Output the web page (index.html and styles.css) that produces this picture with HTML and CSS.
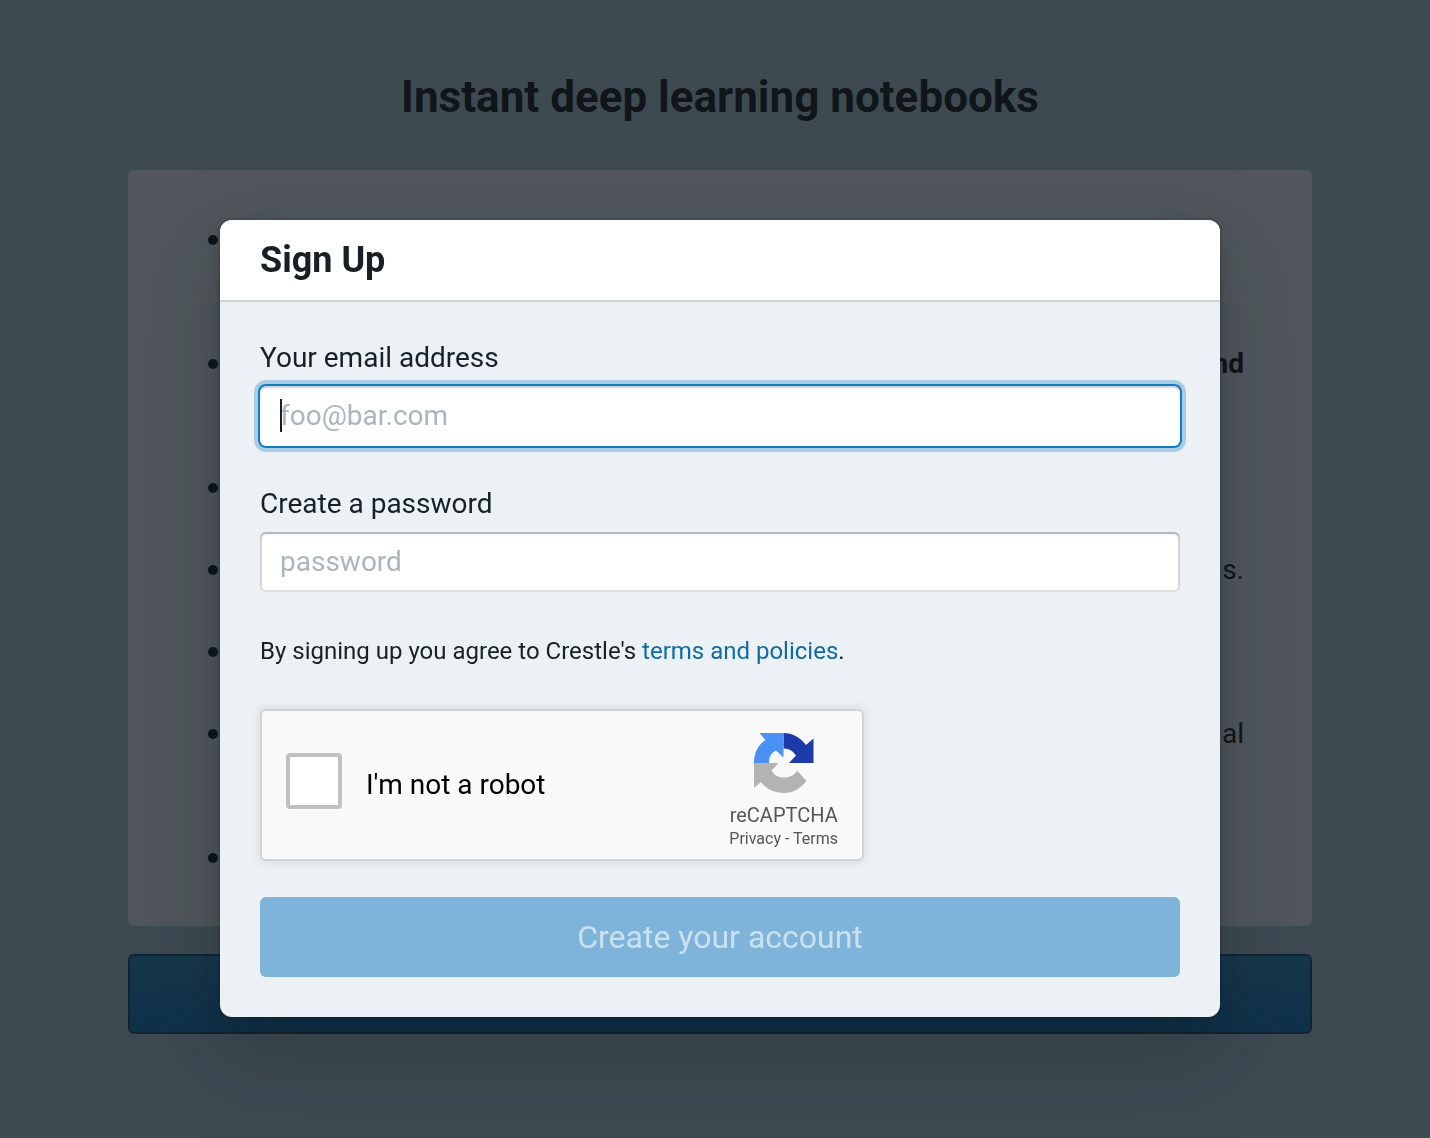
FILE: index.html
```html
<!DOCTYPE html>
<html lang="en">
<head>
<meta charset="utf-8">
<meta name="viewport" content="width=device-width, initial-scale=1">
<title>Sign Up</title>
<link rel="stylesheet" href="styles.css">
</head>
<body>
<main class="page">
  <h1 class="page-title">Instant deep learning notebooks</h1>
  <ul class="features">
    <li class="feature tall"></li>
    <li class="feature tall"><strong>nd</strong></li>
    <li class="feature"></li>
    <li class="feature"><span>s.</span></li>
    <li class="feature"></li>
    <li class="feature tall"><span>al</span></li>
    <li class="feature"></li>
  </ul>
  <button class="page-action" type="button" aria-labelledby="dialog-title"></button>
</main>
<div class="backdrop">
  <section class="dialog" role="dialog" aria-modal="true" aria-labelledby="dialog-title">
    <header class="dialog-header"><h2 class="dialog-title" id="dialog-title">Sign Up</h2></header>
    <form class="dialog-body">
      <div class="field">
        <label for="email">Your email address</label>
        <div class="input-wrap">
          <input class="input active" id="email" type="email" placeholder="foo@bar.com">
          <span class="caret"></span>
        </div>
      </div>
      <div class="field">
        <label for="password">Create a password</label>
        <input class="input" id="password" type="password" placeholder="password">
      </div>
      <p class="agreement">By signing up you agree to Crestle's <a href="#">terms and policies</a>.</p>
      <div class="captcha">
        <div class="captcha-check">
          <input class="checkbox" id="robot" type="checkbox">
          <label class="captcha-label" for="robot">I'm not a robot</label>
        </div>
        <div class="captcha-brand">
          <svg class="captcha-logo" viewBox="0 0 60 60" aria-hidden="true">
            <path fill="#1c3aa9" d="M29.500 0C38 0 46 4 52 12L59.500 5.500V30H35L42 22.500C39 18 35 15.500 29.500 15.500Z"/>
            <path fill="#4a90f5" d="M29.500 0V24.500L22 17.500C17 20 15 24 15 30H0C0 20 4 12 11.500 7L5.500 0Z"/>
            <path fill="#b3b3b3" d="M0 30H24.500L17.500 37.500C20 42 24 44.500 29.500 44.500C36 44.500 41 42 43 37.500L52.500 48C46 56 39 60 30 60C20 60 12 56 7 49L0 55Z"/>
          </svg>
          <div class="captcha-name">reCAPTCHA</div>
          <div class="captcha-links"><a href="#">Privacy</a> - <a href="#">Terms</a></div>
        </div>
      </div>
      <button class="submit" type="submit" disabled>Create your account</button>
    </form>
  </section>
</div>
</body>
</html>
```
FILE: styles.css
```css
* { box-sizing: border-box; }
body {
  margin: 0;
  padding-left: 10px;
  min-height: 100vh;
  background: #a9c7d8;
  color: #10161a;
  font: 28px/42px Roboto, "Liberation Sans", sans-serif;
}
h1, h2, p, ul { margin: 0; }
.page {
  max-width: 1184px;
  margin: 0 auto;
  padding-top: 72px;
}
.page-title {
  font-size: 44px;
  line-height: 50px;
  text-align: center;
}
.features {
  display: flex;
  flex-direction: column;
  gap: 40px;
  margin-top: 48px;
  padding: 49px 68px 47px 80px;
  border-radius: 6px;
  background: #e9f2fa;
  list-style: none;
}
.feature {
  display: flex;
  justify-content: space-between;
  min-height: 42px;
}
.feature::before {
  content: "";
  width: 10px;
  height: 10px;
  margin-top: 16px;
  border-radius: 50%;
  background: #10161a;
}
.tall { min-height: 84px; }
.page-action {
  display: block;
  width: 100%;
  height: 80px;
  margin-top: 28px;
  border: 2px solid #134b6a;
  border-radius: 6px;
  background: linear-gradient(#2986bd, #0e74ba);
}
.backdrop {
  position: fixed;
  inset: 0;
  padding: 220px 0 40px 10px;
  overflow: auto;
  background: rgba(16, 22, 26, 0.7);
}
.dialog {
  max-width: 1000px;
  margin: 0 auto;
  border-radius: 12px;
  background: #ebf1f5;
  color: #182026;
  box-shadow: 0 0 0 2px rgba(16, 22, 26, 0.1), 0 8px 16px rgba(16, 22, 26, 0.2), 0 36px 92px 12px rgba(16, 22, 26, 0.2);
}
.dialog-header {
  padding: 20px 40px;
  border-bottom: 2px solid #ced5da;
  border-radius: 12px 12px 0 0;
  background: #fff;
}
.dialog-title {
  font-size: 36px;
  line-height: 40px;
}
.dialog-body {
  display: flex;
  flex-direction: column;
  padding: 38px 40px 40px;
}
.field {
  display: flex;
  flex-direction: column;
  gap: 10px;
  margin-bottom: 40px;
  line-height: 36px;
}
.input-wrap {
  display: flex;
  position: relative;
}
.input {
  width: 100%;
  height: 60px;
  padding: 0 20px 2px;
  border: 0;
  border-radius: 6px;
  outline: 0;
  background: #fff;
  color: inherit;
  font: inherit;
  box-shadow: inset 0 0 0 2px rgba(16, 22, 26, 0.15), inset 0 2px 2px rgba(16, 22, 26, 0.2);
}
.input.active {
  box-shadow: 0 0 0 2px #137cbd, 0 0 0 6px rgba(19, 124, 189, 0.3), inset 0 2px 2px rgba(16, 22, 26, 0.2);
}
.input::placeholder { color: #abb5bd; opacity: 1; }
.caret {
  position: absolute;
  left: 20px;
  top: 13px;
  width: 2px;
  height: 33px;
  background: #182026;
}
.agreement {
  font-size: 24px;
  line-height: 38px;
}
.agreement a { color: #106ba3; text-decoration: none; }
.captcha {
  display: flex;
  justify-content: space-between;
  max-width: 604px;
  margin: 39px 0 36px;
  padding: 0 24px;
  border: 2px solid #d3d3d3;
  border-radius: 6px;
  background: #f9f9f9;
  color: #000;
  box-shadow: 0 0 8px 2px rgba(0, 0, 0, 0.08);
}
.captcha-check {
  display: flex;
  align-items: center;
  gap: 24px;
  padding-bottom: 8px;
}
.captcha-label { padding-top: 8px; }
.checkbox {
  appearance: none;
  width: 56px;
  height: 56px;
  margin: 0;
  border: 4px solid #c1c1c1;
  border-radius: 4px;
  background: #fff;
}
.captcha-brand {
  display: flex;
  flex-direction: column;
  align-items: center;
  padding: 22px 0 8px;
  color: #555;
}
.captcha-logo { width: 60px; height: 60px; }
.captcha-name {
  margin-top: 10px;
  font-size: 20px;
  line-height: 24px;
}
.captcha-links {
  font-size: 16px;
  line-height: 24px;
}
.captcha-links a { color: inherit; text-decoration: none; }
.submit {
  height: 80px;
  border: 0;
  border-radius: 6px;
  background: #7eb4d9;
  color: #cbe1f0;
  font: 32px/40px Roboto, "Liberation Sans", sans-serif;
}
```
